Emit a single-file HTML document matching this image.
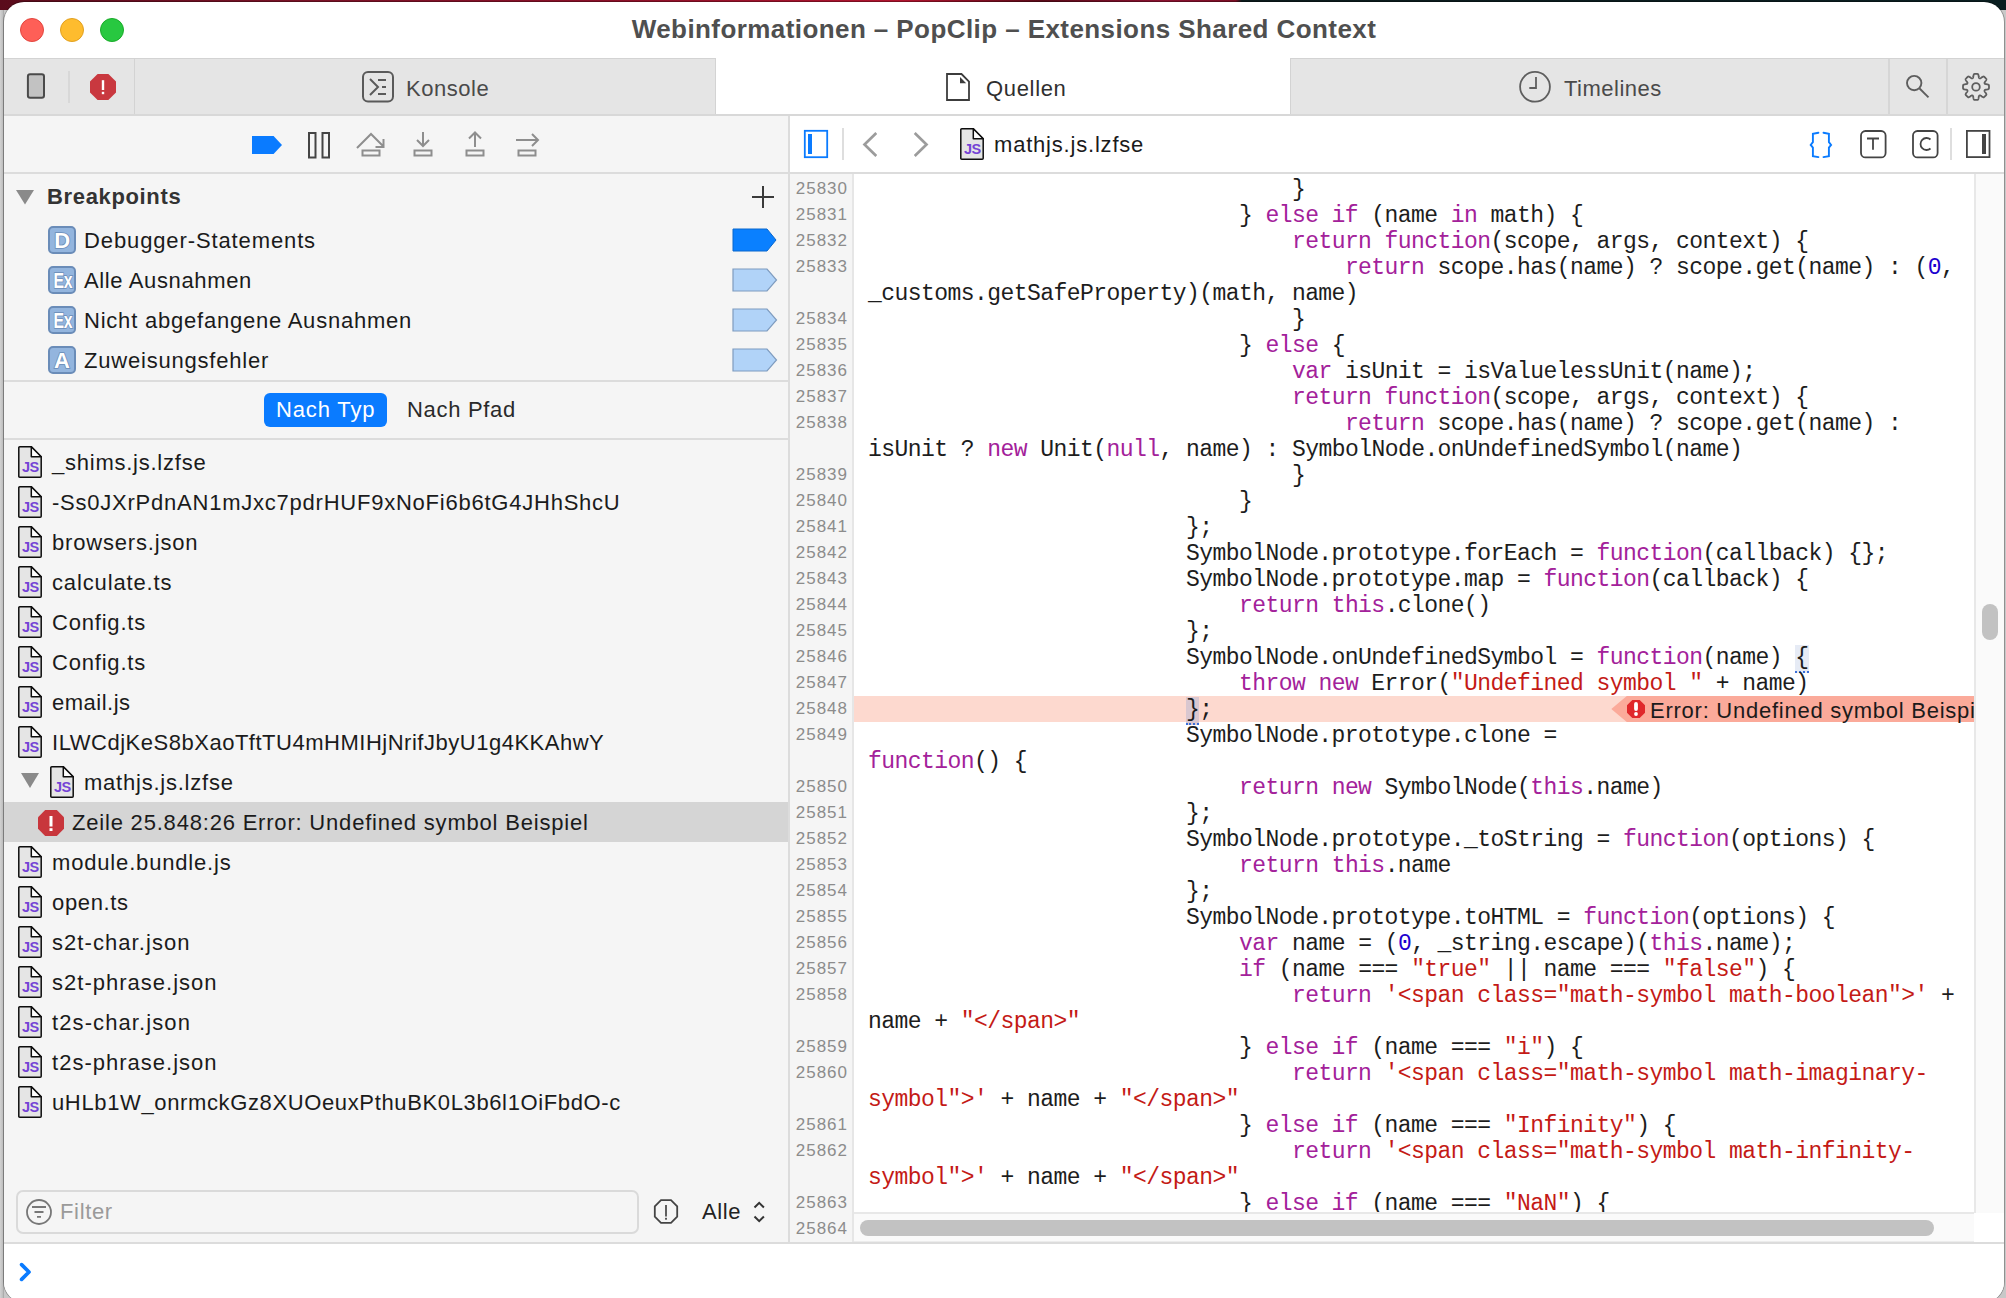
<!DOCTYPE html>
<html><head><meta charset="utf-8">
<style>
*{box-sizing:border-box;margin:0;padding:0}
html,body{width:2006px;height:1298px;overflow:hidden}
body{position:relative;font-family:"Liberation Sans",sans-serif;background:linear-gradient(90deg,#d2d2d2 0,#bdbdbd 3px,#9a9a9a 4px,#c8c8c8 4px)}
.abs{position:absolute}
svg.abs{overflow:visible}
#bgtop{left:0;top:0;width:2006px;height:10px;background:linear-gradient(90deg,#5a0c1c 0%,#7a1226 15%,#8a1028 30%,#b0142e 45%,#5a0a18 52%,#8a1230 58%,#7a0e24 61.6%,#0c1a1c 61.9%,#0a1e20 100%)}
#win{left:4px;top:2px;width:2000px;height:1300px;background:#fff;border-radius:20px;overflow:hidden;box-shadow:0 0 0 1px rgba(0,0,0,0.28)}
#pg{left:-4px;top:-2px;width:2006px;height:1298px}
.tl{position:absolute;top:18px;width:24px;height:24px;border-radius:50%}
#ttext{position:absolute;left:4px;width:2000px;top:14px;text-align:center;font-weight:bold;font-size:26px;letter-spacing:0.42px;color:#4f4f4f;white-space:nowrap;line-height:30px}
.tabt{position:absolute;font-size:22px;color:#4a4a4a;white-space:nowrap;line-height:26px}
.cl{position:absolute;left:868px;font-family:"Liberation Mono",monospace;font-size:23px;letter-spacing:-0.556px;line-height:26px;white-space:pre;color:#1d1d1d}
.ln{position:absolute;left:790px;width:58px;text-align:right;font-size:17px;color:#8c8c8c;letter-spacing:1px;line-height:26px;margin-top:-1px}
.k{color:#a3219a}.s{color:#c41a16}.n{color:#1c00cf}
.brace{background:#e6ebf5;border-bottom:2px dotted #3a6fd8}
.brace2{background:#d9c7d0;border-bottom:2px dotted #3a6fd8}
.fi{position:absolute;font-size:22px;color:#1b1b1b;white-space:nowrap;line-height:28px;letter-spacing:0.45px}
.bpt{position:absolute;left:84px;font-size:22px;color:#1b1b1b;white-space:nowrap;line-height:28px;letter-spacing:0.45px}
.bpi{position:absolute;left:48px;width:28px;height:28px;border-radius:4px;background:#8fb2dc;border:2px solid #6f93c2;color:#fff;font-weight:bold;font-size:21px;line-height:24px;text-align:center}
</style></head>
<body>
<div id="bgtop" class="abs"></div>
<div id="win" class="abs"><div id="pg" class="abs">
  <!-- title bar -->
  <div class="tl" style="left:20px;background:#fe5f57;border:1px solid #e2463f"></div>
  <div class="tl" style="left:60px;background:#febc2e;border:1px solid #e1a020"></div>
  <div class="tl" style="left:100px;background:#28c840;border:1px solid #1aab29"></div>
  <div id="ttext">Webinformationen – PopClip – Extensions Shared Context</div>

  <!-- tab bar -->
  <div class="abs" style="left:0;top:58px;width:2006px;height:57px;background:#e5e5e5;border-top:1px solid #d3d3d3;border-bottom:1px solid #d3d3d3"></div>
  <div class="abs" style="left:715px;top:58px;width:576px;height:57px;background:#fff;border-left:1px solid #d3d3d3;border-right:1px solid #d3d3d3"></div>
  <div class="abs" style="left:134px;top:59px;width:1px;height:55px;background:#d3d3d3"></div>
  <div class="abs" style="left:68px;top:71px;width:2px;height:32px;background:#d8d8d8"></div>
  <div class="abs" style="left:1888px;top:59px;width:2px;height:55px;background:#d6d6d6"></div>
  <div class="abs" style="left:1946px;top:59px;width:2px;height:55px;background:#d6d6d6"></div>
  <svg class="abs" style="left:0;top:0" width="2006" height="120">
    <rect x="27.9" y="74.3" width="16.1" height="23.4" rx="2.2" fill="#c2c2c2" stroke="#4a4a4a" stroke-width="2"/>
    <path d="M97.6 74 L108.4 74 L116 81.6 L116 92.4 L108.4 100 L97.6 100 L90 92.4 L90 81.6 Z" fill="#c9383f"/>
    <rect x="101.8" y="80.2" width="2.4" height="9.8" fill="#fff"/>
    <rect x="101.8" y="91.8" width="2.4" height="2.4" fill="#fff"/>
    <rect x="363" y="72" width="30" height="29.6" rx="5" fill="none" stroke="#5a5a5a" stroke-width="2"/>
    <path d="M370 79 L378 87 L370 95" fill="none" stroke="#5a5a5a" stroke-width="2"/>
    <path d="M378 80 H386 M382 87 H386 M378 94 H386" stroke="#5a5a5a" stroke-width="2"/>
    <path d="M947 74 H961.5 L969 81.5 V100 H947 Z" fill="none" stroke="#3c3c3c" stroke-width="1.8"/>
    <path d="M960 77 V83.2 H966.2 Z" fill="#3c3c3c"/>
    <circle cx="1535" cy="86.8" r="14.9" fill="none" stroke="#5e5e5e" stroke-width="1.8"/>
    <path d="M1536 77 V88 H1529.3" fill="none" stroke="#5e5e5e" stroke-width="1.8"/>
    <circle cx="1914.2" cy="83.1" r="7.2" fill="none" stroke="#5e5e5e" stroke-width="1.9"/>
    <path d="M1919.6 88.5 L1928.5 97.4" stroke="#5e5e5e" stroke-width="1.9"/>
    <path d="M1989.00 86.90 L1989.00 87.07 L1989.00 87.24 L1988.99 87.41 L1988.98 87.58 L1988.97 87.75 L1988.96 87.92 L1988.95 88.09 L1988.93 88.26 L1988.91 88.43 L1988.89 88.60 L1988.83 88.76 L1988.71 88.91 L1988.52 89.05 L1988.27 89.17 L1987.98 89.28 L1987.64 89.37 L1987.28 89.45 L1986.91 89.52 L1986.55 89.58 L1986.20 89.63 L1985.87 89.68 L1985.59 89.74 L1985.34 89.80 L1985.14 89.87 L1984.97 89.95 L1984.85 90.03 L1984.76 90.13 L1984.69 90.24 L1984.64 90.35 L1984.59 90.46 L1984.55 90.57 L1984.51 90.69 L1984.48 90.81 L1984.48 90.94 L1984.50 91.09 L1984.56 91.26 L1984.66 91.45 L1984.79 91.67 L1984.95 91.91 L1985.14 92.18 L1985.35 92.46 L1985.57 92.76 L1985.78 93.07 L1985.98 93.38 L1986.15 93.68 L1986.29 93.97 L1986.37 94.23 L1986.41 94.46 L1986.39 94.66 L1986.31 94.81 L1986.21 94.95 L1986.10 95.08 L1985.99 95.21 L1985.89 95.34 L1985.77 95.47 L1985.66 95.60 L1985.55 95.72 L1985.43 95.85 L1985.31 95.97 L1985.19 96.09 L1985.07 96.21 L1984.95 96.33 L1984.82 96.45 L1984.70 96.56 L1984.57 96.67 L1984.44 96.79 L1984.31 96.89 L1984.18 97.00 L1984.05 97.11 L1983.91 97.21 L1983.76 97.29 L1983.56 97.31 L1983.33 97.27 L1983.07 97.19 L1982.78 97.05 L1982.48 96.88 L1982.17 96.68 L1981.86 96.47 L1981.56 96.25 L1981.28 96.04 L1981.01 95.85 L1980.77 95.69 L1980.55 95.56 L1980.36 95.46 L1980.19 95.40 L1980.04 95.38 L1979.91 95.38 L1979.79 95.41 L1979.67 95.45 L1979.56 95.49 L1979.45 95.54 L1979.34 95.59 L1979.23 95.66 L1979.13 95.75 L1979.05 95.87 L1978.97 96.04 L1978.90 96.24 L1978.84 96.49 L1978.78 96.77 L1978.73 97.10 L1978.68 97.45 L1978.62 97.81 L1978.55 98.18 L1978.47 98.54 L1978.38 98.88 L1978.27 99.17 L1978.15 99.42 L1978.01 99.61 L1977.86 99.73 L1977.70 99.79 L1977.53 99.81 L1977.36 99.83 L1977.19 99.85 L1977.02 99.86 L1976.85 99.87 L1976.68 99.88 L1976.51 99.89 L1976.34 99.90 L1976.17 99.90 L1976.00 99.90 L1975.83 99.90 L1975.66 99.90 L1975.49 99.89 L1975.32 99.88 L1975.15 99.87 L1974.98 99.86 L1974.81 99.85 L1974.64 99.83 L1974.47 99.81 L1974.30 99.79 L1974.14 99.73 L1973.99 99.61 L1973.85 99.42 L1973.73 99.17 L1973.62 98.88 L1973.53 98.54 L1973.45 98.18 L1973.38 97.81 L1973.32 97.45 L1973.27 97.10 L1973.22 96.77 L1973.16 96.49 L1973.10 96.24 L1973.03 96.04 L1972.95 95.87 L1972.87 95.75 L1972.77 95.66 L1972.66 95.59 L1972.55 95.54 L1972.44 95.49 L1972.33 95.45 L1972.21 95.41 L1972.09 95.38 L1971.96 95.38 L1971.81 95.40 L1971.64 95.46 L1971.45 95.56 L1971.23 95.69 L1970.99 95.85 L1970.72 96.04 L1970.44 96.25 L1970.14 96.47 L1969.83 96.68 L1969.52 96.88 L1969.22 97.05 L1968.93 97.19 L1968.67 97.27 L1968.44 97.31 L1968.24 97.29 L1968.09 97.21 L1967.95 97.11 L1967.82 97.00 L1967.69 96.89 L1967.56 96.79 L1967.43 96.67 L1967.30 96.56 L1967.18 96.45 L1967.05 96.33 L1966.93 96.21 L1966.81 96.09 L1966.69 95.97 L1966.57 95.85 L1966.45 95.72 L1966.34 95.60 L1966.23 95.47 L1966.11 95.34 L1966.01 95.21 L1965.90 95.08 L1965.79 94.95 L1965.69 94.81 L1965.61 94.66 L1965.59 94.46 L1965.63 94.23 L1965.71 93.97 L1965.85 93.68 L1966.02 93.38 L1966.22 93.07 L1966.43 92.76 L1966.65 92.46 L1966.86 92.18 L1967.05 91.91 L1967.21 91.67 L1967.34 91.45 L1967.44 91.26 L1967.50 91.09 L1967.52 90.94 L1967.52 90.81 L1967.49 90.69 L1967.45 90.57 L1967.41 90.46 L1967.36 90.35 L1967.31 90.24 L1967.24 90.13 L1967.15 90.03 L1967.03 89.95 L1966.86 89.87 L1966.66 89.80 L1966.41 89.74 L1966.13 89.68 L1965.80 89.63 L1965.45 89.58 L1965.09 89.52 L1964.72 89.45 L1964.36 89.37 L1964.02 89.28 L1963.73 89.17 L1963.48 89.05 L1963.29 88.91 L1963.17 88.76 L1963.11 88.60 L1963.09 88.43 L1963.07 88.26 L1963.05 88.09 L1963.04 87.92 L1963.03 87.75 L1963.02 87.58 L1963.01 87.41 L1963.00 87.24 L1963.00 87.07 L1963.00 86.90 L1963.00 86.73 L1963.00 86.56 L1963.01 86.39 L1963.02 86.22 L1963.03 86.05 L1963.04 85.88 L1963.05 85.71 L1963.07 85.54 L1963.09 85.37 L1963.11 85.20 L1963.17 85.04 L1963.29 84.89 L1963.48 84.75 L1963.73 84.63 L1964.02 84.52 L1964.36 84.43 L1964.72 84.35 L1965.09 84.28 L1965.45 84.22 L1965.80 84.17 L1966.13 84.12 L1966.41 84.06 L1966.66 84.00 L1966.86 83.93 L1967.03 83.85 L1967.15 83.77 L1967.24 83.67 L1967.31 83.56 L1967.36 83.45 L1967.41 83.34 L1967.45 83.23 L1967.49 83.11 L1967.52 82.99 L1967.52 82.86 L1967.50 82.71 L1967.44 82.54 L1967.34 82.35 L1967.21 82.13 L1967.05 81.89 L1966.86 81.62 L1966.65 81.34 L1966.43 81.04 L1966.22 80.73 L1966.02 80.42 L1965.85 80.12 L1965.71 79.83 L1965.63 79.57 L1965.59 79.34 L1965.61 79.14 L1965.69 78.99 L1965.79 78.85 L1965.90 78.72 L1966.01 78.59 L1966.11 78.46 L1966.23 78.33 L1966.34 78.20 L1966.45 78.08 L1966.57 77.95 L1966.69 77.83 L1966.81 77.71 L1966.93 77.59 L1967.05 77.47 L1967.18 77.35 L1967.30 77.24 L1967.43 77.13 L1967.56 77.01 L1967.69 76.91 L1967.82 76.80 L1967.95 76.69 L1968.09 76.59 L1968.24 76.51 L1968.44 76.49 L1968.67 76.53 L1968.93 76.61 L1969.22 76.75 L1969.52 76.92 L1969.83 77.12 L1970.14 77.33 L1970.44 77.55 L1970.72 77.76 L1970.99 77.95 L1971.23 78.11 L1971.45 78.24 L1971.64 78.34 L1971.81 78.40 L1971.96 78.42 L1972.09 78.42 L1972.21 78.39 L1972.33 78.35 L1972.44 78.31 L1972.55 78.26 L1972.66 78.21 L1972.77 78.14 L1972.87 78.05 L1972.95 77.93 L1973.03 77.76 L1973.10 77.56 L1973.16 77.31 L1973.22 77.03 L1973.27 76.70 L1973.32 76.35 L1973.38 75.99 L1973.45 75.62 L1973.53 75.26 L1973.62 74.92 L1973.73 74.63 L1973.85 74.38 L1973.99 74.19 L1974.14 74.07 L1974.30 74.01 L1974.47 73.99 L1974.64 73.97 L1974.81 73.95 L1974.98 73.94 L1975.15 73.93 L1975.32 73.92 L1975.49 73.91 L1975.66 73.90 L1975.83 73.90 L1976.00 73.90 L1976.17 73.90 L1976.34 73.90 L1976.51 73.91 L1976.68 73.92 L1976.85 73.93 L1977.02 73.94 L1977.19 73.95 L1977.36 73.97 L1977.53 73.99 L1977.70 74.01 L1977.86 74.07 L1978.01 74.19 L1978.15 74.38 L1978.27 74.63 L1978.38 74.92 L1978.47 75.26 L1978.55 75.62 L1978.62 75.99 L1978.68 76.35 L1978.73 76.70 L1978.78 77.03 L1978.84 77.31 L1978.90 77.56 L1978.97 77.76 L1979.05 77.93 L1979.13 78.05 L1979.23 78.14 L1979.34 78.21 L1979.45 78.26 L1979.56 78.31 L1979.67 78.35 L1979.79 78.39 L1979.91 78.42 L1980.04 78.42 L1980.19 78.40 L1980.36 78.34 L1980.55 78.24 L1980.77 78.11 L1981.01 77.95 L1981.28 77.76 L1981.56 77.55 L1981.86 77.33 L1982.17 77.12 L1982.48 76.92 L1982.78 76.75 L1983.07 76.61 L1983.33 76.53 L1983.56 76.49 L1983.76 76.51 L1983.91 76.59 L1984.05 76.69 L1984.18 76.80 L1984.31 76.91 L1984.44 77.01 L1984.57 77.13 L1984.70 77.24 L1984.82 77.35 L1984.95 77.47 L1985.07 77.59 L1985.19 77.71 L1985.31 77.83 L1985.43 77.95 L1985.55 78.08 L1985.66 78.20 L1985.77 78.33 L1985.89 78.46 L1985.99 78.59 L1986.10 78.72 L1986.21 78.85 L1986.31 78.99 L1986.39 79.14 L1986.41 79.34 L1986.37 79.57 L1986.29 79.83 L1986.15 80.12 L1985.98 80.42 L1985.78 80.73 L1985.57 81.04 L1985.35 81.34 L1985.14 81.62 L1984.95 81.89 L1984.79 82.13 L1984.66 82.35 L1984.56 82.54 L1984.50 82.71 L1984.48 82.86 L1984.48 82.99 L1984.51 83.11 L1984.55 83.23 L1984.59 83.34 L1984.64 83.45 L1984.69 83.56 L1984.76 83.67 L1984.85 83.77 L1984.97 83.85 L1985.14 83.93 L1985.34 84.00 L1985.59 84.06 L1985.87 84.12 L1986.20 84.17 L1986.55 84.22 L1986.91 84.28 L1987.28 84.35 L1987.64 84.43 L1987.98 84.52 L1988.27 84.63 L1988.52 84.75 L1988.71 84.89 L1988.83 85.04 L1988.89 85.20 L1988.91 85.37 L1988.93 85.54 L1988.95 85.71 L1988.96 85.88 L1988.97 86.05 L1988.98 86.22 L1988.99 86.39 L1989.00 86.56 L1989.00 86.73 L1989.00 86.90Z" fill="none" stroke="#5e5e5e" stroke-width="1.8"/>
    <circle cx="1976" cy="86.9" r="3.8" fill="none" stroke="#5e5e5e" stroke-width="1.8"/>
  </svg>
  <div id="t_konsole" class="tabt" style="left:406px;top:76px;letter-spacing:0.533px">Konsole</div>
  <div id="t_quellen" class="tabt" style="left:986px;top:76px;color:#2f2f2f;letter-spacing:0.667px">Quellen</div>
  <div id="t_timelines" class="tabt" style="left:1564px;top:76px;letter-spacing:0.5px">Timelines</div>

  <!-- sidebar -->
  <div class="abs" style="left:0;top:115px;width:790px;height:1127px;background:#f5f5f5;border-right:2px solid #dcdcdc"></div>
  <div class="abs" style="left:0;top:172px;width:788px;height:2px;background:#dcdcdc"></div>
  <svg class="abs" style="left:0;top:0" width="800" height="180">
    <path d="M252 136 H273.6 L282 145 L273.6 154 H252 Z" fill="#0a7bff"/>
    <rect x="309" y="133" width="6.5" height="24.5" fill="none" stroke="#444" stroke-width="2"/>
    <rect x="322.5" y="133" width="6.5" height="24.5" fill="none" stroke="#444" stroke-width="2"/>
    <g fill="none" stroke="#8e8e8e" stroke-width="2">
      <path d="M357 148 L371 134 L383 146 M383.5 139 V147 H375.5"/>
      <rect x="362.5" y="150.5" width="17" height="5"/>
      <path d="M423 132 V146 M417 140 L423 146 L429 140"/>
      <rect x="414.5" y="150.5" width="17" height="5"/>
      <path d="M475 147 V132.5 M469 138.5 L475 132.5 L481 138.5"/>
      <rect x="466.5" y="150.5" width="17" height="5"/>
      <path d="M516 140 H538 M532 134 L538 140 L532 146"/>
      <rect x="518.5" y="150.5" width="17" height="5"/>
    </g>
    <path d="M16 190 H34 L25 204.5 Z" fill="#8a8a8a"/>
    <path d="M752 197 H774 M763 186 V208" stroke="#3a3a3a" stroke-width="2"/>
    <path d="M733 229 H767 L776 240 L767 251 H733 Z" fill="#0a80ff" stroke="#0866cc" stroke-width="1"/>
    <path d="M733 269 H767 L776.5 280 L767 291 H733 Z" fill="#b1d3f8" stroke="#7f9cbf" stroke-width="1.2"/>
    <path d="M733 309 H767 L776.5 320 L767 331 H733 Z" fill="#b1d3f8" stroke="#7f9cbf" stroke-width="1.2"/>
    <path d="M733 349 H767 L776.5 360 L767 371 H733 Z" fill="#b1d3f8" stroke="#7f9cbf" stroke-width="1.2"/>
  </svg>
  <div id="t_bp" class="abs" style="left:47px;top:183px;font-weight:bold;font-size:22px;color:#333;line-height:28px;letter-spacing:0.65px">Breakpoints</div>
  <svg class="abs" style="left:48px;top:226px" width="28" height="28" viewBox="0 0 28 28"><rect x="1" y="1" width="26" height="26" rx="4" fill="#93b5de" stroke="#6a8cb8" stroke-width="2"/><text x="14.3" y="22" text-anchor="middle" font-family="Liberation Sans" font-weight="bold" font-size="22" fill="#fff" stroke="#6a8cb8" stroke-width="1.6" paint-order="stroke">D</text></svg><div id="t_bp1" class="bpt" style="top:227px;letter-spacing:0.883px">Debugger-Statements</div>
  <svg class="abs" style="left:48px;top:266px" width="28" height="28" viewBox="0 0 28 28"><rect x="1" y="1" width="26" height="26" rx="4" fill="#93b5de" stroke="#6a8cb8" stroke-width="2"/><text x="5.5" y="22" font-family="Liberation Sans" font-weight="bold" font-size="22" fill="#fff" stroke="#6a8cb8" stroke-width="1.6" paint-order="stroke" transform="translate(5.5 0) scale(0.72 1) translate(-5.5 0)" letter-spacing="-0.5">Ex</text></svg><div id="t_bp2" class="bpt" style="top:267px;letter-spacing:0.635px">Alle Ausnahmen</div>
  <svg class="abs" style="left:48px;top:306px" width="28" height="28" viewBox="0 0 28 28"><rect x="1" y="1" width="26" height="26" rx="4" fill="#93b5de" stroke="#6a8cb8" stroke-width="2"/><text x="5.5" y="22" font-family="Liberation Sans" font-weight="bold" font-size="22" fill="#fff" stroke="#6a8cb8" stroke-width="1.6" paint-order="stroke" transform="translate(5.5 0) scale(0.72 1) translate(-5.5 0)" letter-spacing="-0.5">Ex</text></svg><div id="t_bp3" class="bpt" style="top:307px;letter-spacing:0.781px">Nicht abgefangene Ausnahmen</div>
  <svg class="abs" style="left:48px;top:346px" width="28" height="28" viewBox="0 0 28 28"><rect x="1" y="1" width="26" height="26" rx="4" fill="#93b5de" stroke="#6a8cb8" stroke-width="2"/><text x="14" y="22" text-anchor="middle" font-family="Liberation Sans" font-weight="bold" font-size="22" fill="#fff" stroke="#6a8cb8" stroke-width="1.6" paint-order="stroke">A</text></svg><div id="t_bp4" class="bpt" style="top:347px;letter-spacing:0.797px">Zuweisungsfehler</div>
  <div class="abs" style="left:4px;top:380px;width:784px;height:2px;background:#dcdcdc"></div>
  <div class="abs" style="left:264px;top:393px;width:123px;height:34px;border-radius:6px;background:#0a7bff"></div>
  <div id="t_typ" class="abs" style="left:276px;top:396px;font-size:22px;color:#fff;line-height:28px;letter-spacing:0.85px">Nach Typ</div>
  <div id="t_pfad" class="abs" style="left:407px;top:396px;font-size:22px;color:#2a2a2a;line-height:28px;letter-spacing:0.688px">Nach Pfad</div>
  <div class="abs" style="left:4px;top:438px;width:784px;height:2px;background:#dcdcdc"></div>
  <svg class="abs" style="left:17px;top:445px" width="26" height="34" viewBox="-1 -1 26 34"><path d="M0.8 1.8 Q0.8 0.8 1.8 0.8 L13.3 0.8 L23.2 10.7 L23.2 30.2 Q23.2 31.2 22.2 31.2 L1.8 31.2 Q0.8 31.2 0.8 30.2 Z" fill="#e5e5e5" stroke="#0d0d0d" stroke-width="1.5"/><path d="M13.3 0.8 L13.3 10.7 L23.2 10.7 Z" fill="#fff" stroke="#0d0d0d" stroke-width="1.5" stroke-linejoin="round"/><text x="12.2" y="26" text-anchor="middle" font-family="Liberation Sans" font-weight="bold" font-size="14.5" letter-spacing="-0.6" fill="#7443d6">JS</text></svg>
<div id="t_f0" class="fi" style="left:52px;top:449px;letter-spacing:0.757px">_shims.js.lzfse</div>
<svg class="abs" style="left:17px;top:485px" width="26" height="34" viewBox="-1 -1 26 34"><path d="M0.8 1.8 Q0.8 0.8 1.8 0.8 L13.3 0.8 L23.2 10.7 L23.2 30.2 Q23.2 31.2 22.2 31.2 L1.8 31.2 Q0.8 31.2 0.8 30.2 Z" fill="#e5e5e5" stroke="#0d0d0d" stroke-width="1.5"/><path d="M13.3 0.8 L13.3 10.7 L23.2 10.7 Z" fill="#fff" stroke="#0d0d0d" stroke-width="1.5" stroke-linejoin="round"/><text x="12.2" y="26" text-anchor="middle" font-family="Liberation Sans" font-weight="bold" font-size="14.5" letter-spacing="-0.6" fill="#7443d6">JS</text></svg>
<div id="t_f1" class="fi" style="left:52px;top:489px;letter-spacing:0.767px">-Ss0JXrPdnAN1mJxc7pdrHUF9xNoFi6b6tG4JHhShcU</div>
<svg class="abs" style="left:17px;top:525px" width="26" height="34" viewBox="-1 -1 26 34"><path d="M0.8 1.8 Q0.8 0.8 1.8 0.8 L13.3 0.8 L23.2 10.7 L23.2 30.2 Q23.2 31.2 22.2 31.2 L1.8 31.2 Q0.8 31.2 0.8 30.2 Z" fill="#e5e5e5" stroke="#0d0d0d" stroke-width="1.5"/><path d="M13.3 0.8 L13.3 10.7 L23.2 10.7 Z" fill="#fff" stroke="#0d0d0d" stroke-width="1.5" stroke-linejoin="round"/><text x="12.2" y="26" text-anchor="middle" font-family="Liberation Sans" font-weight="bold" font-size="14.5" letter-spacing="-0.6" fill="#7443d6">JS</text></svg>
<div id="t_f2" class="fi" style="left:52px;top:529px;letter-spacing:0.817px">browsers.json</div>
<svg class="abs" style="left:17px;top:565px" width="26" height="34" viewBox="-1 -1 26 34"><path d="M0.8 1.8 Q0.8 0.8 1.8 0.8 L13.3 0.8 L23.2 10.7 L23.2 30.2 Q23.2 31.2 22.2 31.2 L1.8 31.2 Q0.8 31.2 0.8 30.2 Z" fill="#e5e5e5" stroke="#0d0d0d" stroke-width="1.5"/><path d="M13.3 0.8 L13.3 10.7 L23.2 10.7 Z" fill="#fff" stroke="#0d0d0d" stroke-width="1.5" stroke-linejoin="round"/><text x="12.2" y="26" text-anchor="middle" font-family="Liberation Sans" font-weight="bold" font-size="14.5" letter-spacing="-0.6" fill="#7443d6">JS</text></svg>
<div id="t_f3" class="fi" style="left:52px;top:569px;letter-spacing:0.859px">calculate.ts</div>
<svg class="abs" style="left:17px;top:605px" width="26" height="34" viewBox="-1 -1 26 34"><path d="M0.8 1.8 Q0.8 0.8 1.8 0.8 L13.3 0.8 L23.2 10.7 L23.2 30.2 Q23.2 31.2 22.2 31.2 L1.8 31.2 Q0.8 31.2 0.8 30.2 Z" fill="#e5e5e5" stroke="#0d0d0d" stroke-width="1.5"/><path d="M13.3 0.8 L13.3 10.7 L23.2 10.7 Z" fill="#fff" stroke="#0d0d0d" stroke-width="1.5" stroke-linejoin="round"/><text x="12.2" y="26" text-anchor="middle" font-family="Liberation Sans" font-weight="bold" font-size="14.5" letter-spacing="-0.6" fill="#7443d6">JS</text></svg>
<div id="t_f4" class="fi" style="left:52px;top:609px;letter-spacing:0.8px">Config.ts</div>
<svg class="abs" style="left:17px;top:645px" width="26" height="34" viewBox="-1 -1 26 34"><path d="M0.8 1.8 Q0.8 0.8 1.8 0.8 L13.3 0.8 L23.2 10.7 L23.2 30.2 Q23.2 31.2 22.2 31.2 L1.8 31.2 Q0.8 31.2 0.8 30.2 Z" fill="#e5e5e5" stroke="#0d0d0d" stroke-width="1.5"/><path d="M13.3 0.8 L13.3 10.7 L23.2 10.7 Z" fill="#fff" stroke="#0d0d0d" stroke-width="1.5" stroke-linejoin="round"/><text x="12.2" y="26" text-anchor="middle" font-family="Liberation Sans" font-weight="bold" font-size="14.5" letter-spacing="-0.6" fill="#7443d6">JS</text></svg>
<div id="t_f5" class="fi" style="left:52px;top:649px;letter-spacing:0.8px">Config.ts</div>
<svg class="abs" style="left:17px;top:685px" width="26" height="34" viewBox="-1 -1 26 34"><path d="M0.8 1.8 Q0.8 0.8 1.8 0.8 L13.3 0.8 L23.2 10.7 L23.2 30.2 Q23.2 31.2 22.2 31.2 L1.8 31.2 Q0.8 31.2 0.8 30.2 Z" fill="#e5e5e5" stroke="#0d0d0d" stroke-width="1.5"/><path d="M13.3 0.8 L13.3 10.7 L23.2 10.7 Z" fill="#fff" stroke="#0d0d0d" stroke-width="1.5" stroke-linejoin="round"/><text x="12.2" y="26" text-anchor="middle" font-family="Liberation Sans" font-weight="bold" font-size="14.5" letter-spacing="-0.6" fill="#7443d6">JS</text></svg>
<div id="t_f6" class="fi" style="left:52px;top:689px;letter-spacing:0.493px">email.js</div>
<svg class="abs" style="left:17px;top:725px" width="26" height="34" viewBox="-1 -1 26 34"><path d="M0.8 1.8 Q0.8 0.8 1.8 0.8 L13.3 0.8 L23.2 10.7 L23.2 30.2 Q23.2 31.2 22.2 31.2 L1.8 31.2 Q0.8 31.2 0.8 30.2 Z" fill="#e5e5e5" stroke="#0d0d0d" stroke-width="1.5"/><path d="M13.3 0.8 L13.3 10.7 L23.2 10.7 Z" fill="#fff" stroke="#0d0d0d" stroke-width="1.5" stroke-linejoin="round"/><text x="12.2" y="26" text-anchor="middle" font-family="Liberation Sans" font-weight="bold" font-size="14.5" letter-spacing="-0.6" fill="#7443d6">JS</text></svg>
<div id="t_f7" class="fi" style="left:52px;top:729px;letter-spacing:0.514px">ILWCdjKeS8bXaoTftTU4mHMIHjNrifJbyU1g4KKAhwY</div>
<svg class="abs" style="left:20px;top:771px" width="20" height="18"><path d="M1 2 L19 2 L10 17 Z" fill="#8a8a8a"/></svg>
<svg class="abs" style="left:49px;top:765px" width="26" height="34" viewBox="-1 -1 26 34"><path d="M0.8 1.8 Q0.8 0.8 1.8 0.8 L13.3 0.8 L23.2 10.7 L23.2 30.2 Q23.2 31.2 22.2 31.2 L1.8 31.2 Q0.8 31.2 0.8 30.2 Z" fill="#e5e5e5" stroke="#0d0d0d" stroke-width="1.5"/><path d="M13.3 0.8 L13.3 10.7 L23.2 10.7 Z" fill="#fff" stroke="#0d0d0d" stroke-width="1.5" stroke-linejoin="round"/><text x="12.2" y="26" text-anchor="middle" font-family="Liberation Sans" font-weight="bold" font-size="14.5" letter-spacing="-0.6" fill="#7443d6">JS</text></svg>
<div id="t_f8" class="fi" style="left:84px;top:769px;letter-spacing:0.771px">mathjs.js.lzfse</div>
<div class="abs" style="left:4px;top:802px;width:784px;height:40px;background:#d5d5d5"></div>
<svg class="abs" style="left:37px;top:809px" width="28" height="28" viewBox="0 0 28 28"><path d="M8.2 1 L19.8 1 L27 8.2 L27 19.8 L19.8 27 L8.2 27 L1 19.8 L1 8.2 Z" fill="#c8363c"/><rect x="12.5" y="7" width="3" height="10.5" fill="#fff"/><rect x="12.5" y="19.2" width="3" height="2.8" fill="#fff"/></svg>
<div id="t_f9" class="fi" style="left:72px;top:809px;letter-spacing:0.803px">Zeile 25.848:26 Error: Undefined symbol Beispiel</div>
<svg class="abs" style="left:17px;top:845px" width="26" height="34" viewBox="-1 -1 26 34"><path d="M0.8 1.8 Q0.8 0.8 1.8 0.8 L13.3 0.8 L23.2 10.7 L23.2 30.2 Q23.2 31.2 22.2 31.2 L1.8 31.2 Q0.8 31.2 0.8 30.2 Z" fill="#e5e5e5" stroke="#0d0d0d" stroke-width="1.5"/><path d="M13.3 0.8 L13.3 10.7 L23.2 10.7 Z" fill="#fff" stroke="#0d0d0d" stroke-width="1.5" stroke-linejoin="round"/><text x="12.2" y="26" text-anchor="middle" font-family="Liberation Sans" font-weight="bold" font-size="14.5" letter-spacing="-0.6" fill="#7443d6">JS</text></svg>
<div id="t_f10" class="fi" style="left:52px;top:849px;letter-spacing:0.83px">module.bundle.js</div>
<svg class="abs" style="left:17px;top:885px" width="26" height="34" viewBox="-1 -1 26 34"><path d="M0.8 1.8 Q0.8 0.8 1.8 0.8 L13.3 0.8 L23.2 10.7 L23.2 30.2 Q23.2 31.2 22.2 31.2 L1.8 31.2 Q0.8 31.2 0.8 30.2 Z" fill="#e5e5e5" stroke="#0d0d0d" stroke-width="1.5"/><path d="M13.3 0.8 L13.3 10.7 L23.2 10.7 Z" fill="#fff" stroke="#0d0d0d" stroke-width="1.5" stroke-linejoin="round"/><text x="12.2" y="26" text-anchor="middle" font-family="Liberation Sans" font-weight="bold" font-size="14.5" letter-spacing="-0.6" fill="#7443d6">JS</text></svg>
<div id="t_f11" class="fi" style="left:52px;top:889px;letter-spacing:0.65px">open.ts</div>
<svg class="abs" style="left:17px;top:925px" width="26" height="34" viewBox="-1 -1 26 34"><path d="M0.8 1.8 Q0.8 0.8 1.8 0.8 L13.3 0.8 L23.2 10.7 L23.2 30.2 Q23.2 31.2 22.2 31.2 L1.8 31.2 Q0.8 31.2 0.8 30.2 Z" fill="#e5e5e5" stroke="#0d0d0d" stroke-width="1.5"/><path d="M13.3 0.8 L13.3 10.7 L23.2 10.7 Z" fill="#fff" stroke="#0d0d0d" stroke-width="1.5" stroke-linejoin="round"/><text x="12.2" y="26" text-anchor="middle" font-family="Liberation Sans" font-weight="bold" font-size="14.5" letter-spacing="-0.6" fill="#7443d6">JS</text></svg>
<div id="t_f12" class="fi" style="left:52px;top:929px;letter-spacing:1.067px">s2t-char.json</div>
<svg class="abs" style="left:17px;top:965px" width="26" height="34" viewBox="-1 -1 26 34"><path d="M0.8 1.8 Q0.8 0.8 1.8 0.8 L13.3 0.8 L23.2 10.7 L23.2 30.2 Q23.2 31.2 22.2 31.2 L1.8 31.2 Q0.8 31.2 0.8 30.2 Z" fill="#e5e5e5" stroke="#0d0d0d" stroke-width="1.5"/><path d="M13.3 0.8 L13.3 10.7 L23.2 10.7 Z" fill="#fff" stroke="#0d0d0d" stroke-width="1.5" stroke-linejoin="round"/><text x="12.2" y="26" text-anchor="middle" font-family="Liberation Sans" font-weight="bold" font-size="14.5" letter-spacing="-0.6" fill="#7443d6">JS</text></svg>
<div id="t_f13" class="fi" style="left:52px;top:969px;letter-spacing:1.014px">s2t-phrase.json</div>
<svg class="abs" style="left:17px;top:1005px" width="26" height="34" viewBox="-1 -1 26 34"><path d="M0.8 1.8 Q0.8 0.8 1.8 0.8 L13.3 0.8 L23.2 10.7 L23.2 30.2 Q23.2 31.2 22.2 31.2 L1.8 31.2 Q0.8 31.2 0.8 30.2 Z" fill="#e5e5e5" stroke="#0d0d0d" stroke-width="1.5"/><path d="M13.3 0.8 L13.3 10.7 L23.2 10.7 Z" fill="#fff" stroke="#0d0d0d" stroke-width="1.5" stroke-linejoin="round"/><text x="12.2" y="26" text-anchor="middle" font-family="Liberation Sans" font-weight="bold" font-size="14.5" letter-spacing="-0.6" fill="#7443d6">JS</text></svg>
<div id="t_f14" class="fi" style="left:52px;top:1009px;letter-spacing:1.1px">t2s-char.json</div>
<svg class="abs" style="left:17px;top:1045px" width="26" height="34" viewBox="-1 -1 26 34"><path d="M0.8 1.8 Q0.8 0.8 1.8 0.8 L13.3 0.8 L23.2 10.7 L23.2 30.2 Q23.2 31.2 22.2 31.2 L1.8 31.2 Q0.8 31.2 0.8 30.2 Z" fill="#e5e5e5" stroke="#0d0d0d" stroke-width="1.5"/><path d="M13.3 0.8 L13.3 10.7 L23.2 10.7 Z" fill="#fff" stroke="#0d0d0d" stroke-width="1.5" stroke-linejoin="round"/><text x="12.2" y="26" text-anchor="middle" font-family="Liberation Sans" font-weight="bold" font-size="14.5" letter-spacing="-0.6" fill="#7443d6">JS</text></svg>
<div id="t_f15" class="fi" style="left:52px;top:1049px;letter-spacing:1.014px">t2s-phrase.json</div>
<svg class="abs" style="left:17px;top:1085px" width="26" height="34" viewBox="-1 -1 26 34"><path d="M0.8 1.8 Q0.8 0.8 1.8 0.8 L13.3 0.8 L23.2 10.7 L23.2 30.2 Q23.2 31.2 22.2 31.2 L1.8 31.2 Q0.8 31.2 0.8 30.2 Z" fill="#e5e5e5" stroke="#0d0d0d" stroke-width="1.5"/><path d="M13.3 0.8 L13.3 10.7 L23.2 10.7 Z" fill="#fff" stroke="#0d0d0d" stroke-width="1.5" stroke-linejoin="round"/><text x="12.2" y="26" text-anchor="middle" font-family="Liberation Sans" font-weight="bold" font-size="14.5" letter-spacing="-0.6" fill="#7443d6">JS</text></svg>
<div id="t_f16" class="fi" style="left:52px;top:1089px;letter-spacing:0.633px">uHLb1W_onrmckGz8XUOeuxPthuBK0L3b6l1OiFbdO-c</div>
  <!-- filter -->
  <div class="abs" style="left:16px;top:1190px;width:623px;height:44px;border-radius:7px;border:2px solid #dadada;background:#f5f5f5"></div>
  <svg class="abs" style="left:0;top:1180px" width="800" height="60">
    <circle cx="39" cy="32" r="12" fill="none" stroke="#777" stroke-width="1.8"/>
    <path d="M32 27 H46 M34.5 32 H43.5 M37 36.8 H41" stroke="#777" stroke-width="1.8"/>
    <path d="M661 20.2 H671 L677.2 26.4 V36.6 L671 42.8 H661 L654.8 36.6 V26.4 Z" fill="none" stroke="#444" stroke-width="1.8"/>
    <path d="M666 25 V36.5" stroke="#444" stroke-width="1.7"/><rect x="665.1" y="37.8" width="1.8" height="1.9" fill="#444"/>
    <path d="M754.5 27.5 L759.2 22.8 L763.9 27.5 M754.5 36.5 L759.2 41.2 L763.9 36.5" fill="none" stroke="#333" stroke-width="2"/>
  </svg>
  <div id="t_filter" class="abs" style="left:60px;top:1198px;font-size:22px;color:#9a9a9a;line-height:28px;letter-spacing:0.65px">Filter</div>
  <div id="t_alle" class="abs" style="left:702px;top:1198px;font-size:22px;color:#222;line-height:28px;letter-spacing:0.617px">Alle</div>

  <!-- content nav bar -->
  <div class="abs" style="left:790px;top:115px;width:1216px;height:59px;background:#fff;border-bottom:2px solid #dcdcdc"></div>
  <div class="abs" style="left:0;top:114px;width:2006px;height:2px;background:#d8d8d8"></div>
  <svg class="abs" style="left:0;top:0" width="2006" height="180">
    <rect x="804.8" y="130.8" width="22.4" height="26.4" fill="none" stroke="#0a7bff" stroke-width="1.8"/>
    <rect x="808" y="134" width="4" height="20" fill="#0a7bff"/>
    <rect x="842" y="128" width="2" height="32" fill="#dedede"/>
    <path d="M876.3 133 L864.5 144.5 L876.3 156" fill="none" stroke="#9c9c9c" stroke-width="2.7"/>
    <path d="M914.7 133 L926.5 144.5 L914.7 156" fill="none" stroke="#9c9c9c" stroke-width="2.7"/>
    <path d="M1818.4 132.8 L1812.9 133.9 V142.1 L1810.7 144.9 L1812.9 147.7 V156.1 L1818.4 157.1 M1823.5 132.8 L1828.9 133.9 V142.1 L1831.1 144.9 L1828.9 147.7 V156.1 L1823.5 157.1" fill="none" stroke="#0a7bff" stroke-width="1.9" stroke-linecap="round" stroke-linejoin="miter"/>
    <rect x="1861" y="131" width="24.6" height="26.4" rx="4.5" fill="none" stroke="#444" stroke-width="1.8"/>
    <path d="M1867 138.5 H1879 M1873 138.5 V149.8" stroke="#444" stroke-width="1.8"/>
    <rect x="1913" y="131" width="24.6" height="26.4" rx="4.5" fill="none" stroke="#444" stroke-width="1.8"/>
    <path d="M1930.5 139.5 A6 6 0 1 0 1930.5 148.5" fill="none" stroke="#444" stroke-width="1.8"/>
    <rect x="1950" y="128" width="2" height="32" fill="#dedede"/>
    <rect x="1966.9" y="130.9" width="22.6" height="26.2" fill="none" stroke="#444" stroke-width="1.8"/>
    <rect x="1982" y="134" width="4" height="20" fill="#444"/>
  </svg>
  <svg class="abs" style="left:959px;top:127px" width="26" height="34" viewBox="-1 -1 26 34">
    <path d="M0.8 1.8 Q0.8 0.8 1.8 0.8 L13.3 0.8 L23.2 10.7 L23.2 30.2 Q23.2 31.2 22.2 31.2 L1.8 31.2 Q0.8 31.2 0.8 30.2 Z" fill="#e5e5e5" stroke="#0d0d0d" stroke-width="1.5"/>
    <path d="M13.3 0.8 L13.3 10.7 L23.2 10.7 Z" fill="#fff" stroke="#0d0d0d" stroke-width="1.5" stroke-linejoin="round"/>
    <text x="12.2" y="26" text-anchor="middle" font-family="Liberation Sans" font-weight="bold" font-size="14.5" letter-spacing="-0.6" fill="#7443d6">JS</text>
  </svg>
  <div id="t_navfile" class="abs" style="left:994px;top:131px;font-size:22px;color:#1b1b1b;line-height:28px;letter-spacing:0.8px">mathjs.js.lzfse</div>

  <!-- gutter and code -->
  <div class="abs" style="left:790px;top:174px;width:64px;height:1068px;background:#f5f5f5;border-right:2px solid #e6e6e6"></div>
  <div class="abs" style="left:854px;top:696px;width:1120px;height:26px;background:#fdd9cf"></div>
  <div class="ln" style="top:177px">25830</div>
<div class="ln" style="top:203px">25831</div>
<div class="ln" style="top:229px">25832</div>
<div class="ln" style="top:255px">25833</div>
<div class="ln" style="top:307px">25834</div>
<div class="ln" style="top:333px">25835</div>
<div class="ln" style="top:359px">25836</div>
<div class="ln" style="top:385px">25837</div>
<div class="ln" style="top:411px">25838</div>
<div class="ln" style="top:463px">25839</div>
<div class="ln" style="top:489px">25840</div>
<div class="ln" style="top:515px">25841</div>
<div class="ln" style="top:541px">25842</div>
<div class="ln" style="top:567px">25843</div>
<div class="ln" style="top:593px">25844</div>
<div class="ln" style="top:619px">25845</div>
<div class="ln" style="top:645px">25846</div>
<div class="ln" style="top:671px">25847</div>
<div class="ln" style="top:697px">25848</div>
<div class="ln" style="top:723px">25849</div>
<div class="ln" style="top:775px">25850</div>
<div class="ln" style="top:801px">25851</div>
<div class="ln" style="top:827px">25852</div>
<div class="ln" style="top:853px">25853</div>
<div class="ln" style="top:879px">25854</div>
<div class="ln" style="top:905px">25855</div>
<div class="ln" style="top:931px">25856</div>
<div class="ln" style="top:957px">25857</div>
<div class="ln" style="top:983px">25858</div>
<div class="ln" style="top:1035px">25859</div>
<div class="ln" style="top:1061px">25860</div>
<div class="ln" style="top:1113px">25861</div>
<div class="ln" style="top:1139px">25862</div>
<div class="ln" style="top:1191px">25863</div>
<div class="ln" style="top:1217px">25864</div>
  <div class="cl" style="top:177px">                                }</div>
<div class="cl" style="top:203px">                            } <span class="k">else if</span> (name <span class="k">in</span> math) {</div>
<div class="cl" style="top:229px">                                <span class="k">return function</span>(scope, args, context) {</div>
<div class="cl" style="top:255px">                                    <span class="k">return</span> scope.has(name) ? scope.get(name) : (<span class="n">0</span>,</div>
<div class="cl" style="top:281px">_customs.getSafeProperty)(math, name)</div>
<div class="cl" style="top:307px">                                }</div>
<div class="cl" style="top:333px">                            } <span class="k">else</span> {</div>
<div class="cl" style="top:359px">                                <span class="k">var</span> isUnit = isValuelessUnit(name);</div>
<div class="cl" style="top:385px">                                <span class="k">return function</span>(scope, args, context) {</div>
<div class="cl" style="top:411px">                                    <span class="k">return</span> scope.has(name) ? scope.get(name) :</div>
<div class="cl" style="top:437px">isUnit ? <span class="k">new</span> Unit(<span class="k">null</span>, name) : SymbolNode.onUndefinedSymbol(name)</div>
<div class="cl" style="top:463px">                                }</div>
<div class="cl" style="top:489px">                            }</div>
<div class="cl" style="top:515px">                        };</div>
<div class="cl" style="top:541px">                        SymbolNode.prototype.forEach = <span class="k">function</span>(callback) {};</div>
<div class="cl" style="top:567px">                        SymbolNode.prototype.map = <span class="k">function</span>(callback) {</div>
<div class="cl" style="top:593px">                            <span class="k">return this</span>.clone()</div>
<div class="cl" style="top:619px">                        };</div>
<div class="cl" style="top:645px">                        SymbolNode.onUndefinedSymbol = <span class="k">function</span>(name) <span class="brace">{</span></div>
<div class="cl" style="top:671px">                            <span class="k">throw new</span> Error(<span class="s">"Undefined symbol "</span> + name)</div>
<div class="cl" style="top:697px">                        <span class="brace2">}</span>;</div>
<div class="cl" style="top:723px">                        SymbolNode.prototype.clone =</div>
<div class="cl" style="top:749px"><span class="k">function</span>() {</div>
<div class="cl" style="top:775px">                            <span class="k">return new</span> SymbolNode(<span class="k">this</span>.name)</div>
<div class="cl" style="top:801px">                        };</div>
<div class="cl" style="top:827px">                        SymbolNode.prototype._toString = <span class="k">function</span>(options) {</div>
<div class="cl" style="top:853px">                            <span class="k">return this</span>.name</div>
<div class="cl" style="top:879px">                        };</div>
<div class="cl" style="top:905px">                        SymbolNode.prototype.toHTML = <span class="k">function</span>(options) {</div>
<div class="cl" style="top:931px">                            <span class="k">var</span> name = (<span class="n">0</span>, _string.escape)(<span class="k">this</span>.name);</div>
<div class="cl" style="top:957px">                            <span class="k">if</span> (name === <span class="s">"true"</span> || name === <span class="s">"false"</span>) {</div>
<div class="cl" style="top:983px">                                <span class="k">return</span> <span class="s">'&lt;span class="math-symbol math-boolean"&gt;'</span> +</div>
<div class="cl" style="top:1009px">name + <span class="s">"&lt;/span&gt;"</span></div>
<div class="cl" style="top:1035px">                            } <span class="k">else if</span> (name === <span class="s">"i"</span>) {</div>
<div class="cl" style="top:1061px">                                <span class="k">return</span> <span class="s">'&lt;span class="math-symbol math-imaginary-</span></div>
<div class="cl" style="top:1087px"><span class="s">symbol"&gt;'</span> + name + <span class="s">"&lt;/span&gt;"</span></div>
<div class="cl" style="top:1113px">                            } <span class="k">else if</span> (name === <span class="s">"Infinity"</span>) {</div>
<div class="cl" style="top:1139px">                                <span class="k">return</span> <span class="s">'&lt;span class="math-symbol math-infinity-</span></div>
<div class="cl" style="top:1165px"><span class="s">symbol"&gt;'</span> + name + <span class="s">"&lt;/span&gt;"</span></div>
<div class="cl" style="top:1191px">                            } <span class="k">else if</span> (name === <span class="s">"NaN"</span>) {</div>
<div class="cl" style="top:1217px"></div>
  <svg class="abs" style="left:0;top:0" width="2006" height="760">
    <path d="M1611.3 709 L1626.8 696 H1974 V722 H1626.8 Z" fill="#fbaa9a"/>
    <path d="M1632.3 700 L1639.7 700 L1645 705.3 L1645 712.7 L1639.7 718 L1632.3 718 L1627 712.7 L1627 705.3 Z" fill="#e0282b"/>
    <rect x="1634.1" y="702" width="3.8" height="9" rx="1.9" fill="#fff"/><circle cx="1636" cy="714" r="1.9" fill="#fff"/>
  </svg>
  <div class="abs" style="left:1650px;top:697px;width:324px;overflow:hidden;font-size:22px;color:#1b1b1b;line-height:28px;white-space:nowrap"><span id="t_errw" style="letter-spacing:0.75px">Error: Undefined symbol Beispiel</span></div>
  <!-- scrollbars -->
  <div class="abs" style="left:1974px;top:174px;width:30px;height:1039px;background:#fafafa;border-left:2px solid #e8e8e8"></div>
  <div class="abs" style="left:1982px;top:604px;width:16px;height:36px;border-radius:8px;background:#c2c2c2"></div>
  <div class="abs" style="left:854px;top:1212px;width:1120px;height:30px;background:#fafafa;border-top:2px solid #e8e8e8;border-bottom:1px solid #ececec"></div>
  <div class="abs" style="left:860px;top:1220px;width:1074px;height:16px;border-radius:8px;background:#c2c2c2"></div>

  <!-- console -->
  <div class="abs" style="left:0;top:1242px;width:2006px;height:58px;background:#fff;border-top:2px solid #dcdcdc"></div>
  <svg class="abs" style="left:0;top:1250px" width="60" height="48">
    <path d="M21.6 14.6 L29 22 L21.6 29.4" fill="none" stroke="#0a7bff" stroke-width="3.7" stroke-linecap="round" stroke-linejoin="round"/>
  </svg>
</div></div>
</body></html>
